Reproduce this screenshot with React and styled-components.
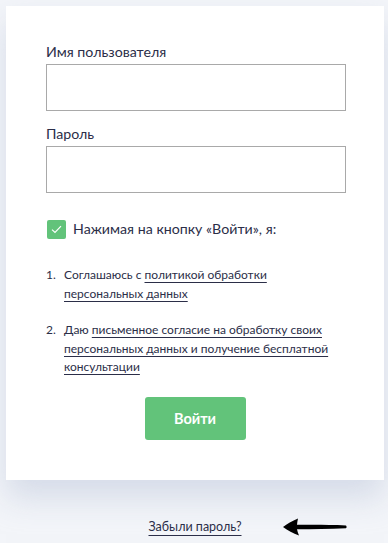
import styled, { createGlobalStyle } from "styled-components";

const GlobalStyle = createGlobalStyle`
  * { box-sizing: border-box; }
  body {
    margin: 0;
    background: #f3f5f9;
    font-family: Lato, "Noto Sans", sans-serif;
    color: #2b2e48;
  }
`;

function App() {
  return (
    <>
      <GlobalStyle />
      <Page>
        <Card>
          <Field>
            <Label>Имя пользователя</Label>
            <Input type="text" />
          </Field>
          <Field>
            <Label>Пароль</Label>
            <Input type="password" />
          </Field>
          <Agree>
            <CheckBox>
              <svg width="11" height="9" viewBox="0 0 11 9">
                <path d="M1 4.6 L4 7.4 L10 1.2" fill="none" stroke="#fff" strokeWidth="1.2" />
              </svg>
            </CheckBox>
            <span>Нажимая на кнопку «Войти», я:</span>
          </Agree>
          <Terms>
            {terms.map((term, index) => (
              <Term key={index}>
                <Num>{index + 1}.</Num>
                <p>
                  {term.text}
                  <Link>{term.link}</Link>
                </p>
              </Term>
            ))}
          </Terms>
          <Submit>Войти</Submit>
        </Card>
        <Bottom>
          <Forgot>Забыли пароль?</Forgot>
          <Arrow width="64" height="18" viewBox="0 0 64 18">
            <path
              d="M0 9 C4 6 9 3 15 0.5 C14.5 2.8 14.2 4.8 14 6.8 C30 6.6 46 6.6 63 7.4 C63.8 8.2 63.8 9.6 63 10.2 C46 10.8 30 11 14 11.3 C14.4 13.3 15 15.3 16 17.6 C10 15.2 4.8 12.4 0 9 Z"
              fill="#000"
            />
          </Arrow>
        </Bottom>
      </Page>
    </>
  );
}

export default App;

const terms = [
  { text: "Соглашаюсь с ", link: "политикой обработки персональных данных" },
  {
    text: "Даю ",
    link: "письменное согласие на обработку своих персональных данных и получение бесплатной консультации",
  },
];

const Page = styled.div`
  width: 388px;
  height: 543px;
  padding: 6px 4px 0 6px;
  overflow: hidden;
`;

const Card = styled.div`
  background: #fff;
  padding: 36px 40px 40px 40px;
  box-shadow: 0 18px 30px rgba(190, 198, 218, 0.55);
  display: flex;
  flex-direction: column;
`;

const Field = styled.div`
  display: flex;
  flex-direction: column;
  margin-bottom: 13px;
`;

const Label = styled.label`
  font-size: 14.2px;
  line-height: 20px;
  margin-bottom: 2px;
  color: #2b2e48;
`;

const Input = styled.input`
  width: 300px;
  height: 47px;
  border: 1.5px solid #a9a9a9;
  border-radius: 0;
  outline: none;
  padding: 0 12px;
  font-size: 15px;
`;

const Agree = styled.div`
  display: flex;
  align-items: center;
  gap: 7px;
  margin-top: 13px;
  font-size: 14.2px;
  line-height: 20px;
`;

const CheckBox = styled.span`
  width: 19px;
  height: 19px;
  margin-left: 1px;
  border-radius: 2px;
  background: #62c37a;
  display: flex;
  align-items: center;
  justify-content: center;
`;

const Terms = styled.ol`
  list-style: none;
  margin: 27px 0 0;
  padding: 0;
  display: flex;
  flex-direction: column;
  gap: 18px;
`;

const Term = styled.li`
  display: flex;
  font-size: 12px;
  line-height: 18.5px;
  p {
    margin: 0;
    width: 282px;
  }
`;

const Num = styled.span`
  width: 18px;
  flex-shrink: 0;
`;

const Link = styled.a`
  color: #2b2e48;
  text-decoration: underline;
  text-decoration-thickness: 1px;
  text-underline-offset: 3px;
  cursor: pointer;
`;

const Submit = styled.button`
  align-self: center;
  margin-top: 20px;
  width: 101px;
  height: 43px;
  border: none;
  border-radius: 3px;
  background: #62c37a;
  color: #fff;
  font-family: inherit;
  font-size: 14.5px;
  font-weight: 700;
  cursor: pointer;
`;

const Bottom = styled.div`
  position: relative;
  display: flex;
  justify-content: center;
  margin-top: 38px;
`;

const Forgot = styled.a`
  font-size: 12.5px;
  line-height: 18px;
  color: #2b2e48;
  text-decoration: underline;
  text-decoration-thickness: 1px;
  text-underline-offset: 4px;
  cursor: pointer;
`;

const Arrow = styled.svg`
  position: absolute;
  left: 277px;
  top: 0px;
`;
